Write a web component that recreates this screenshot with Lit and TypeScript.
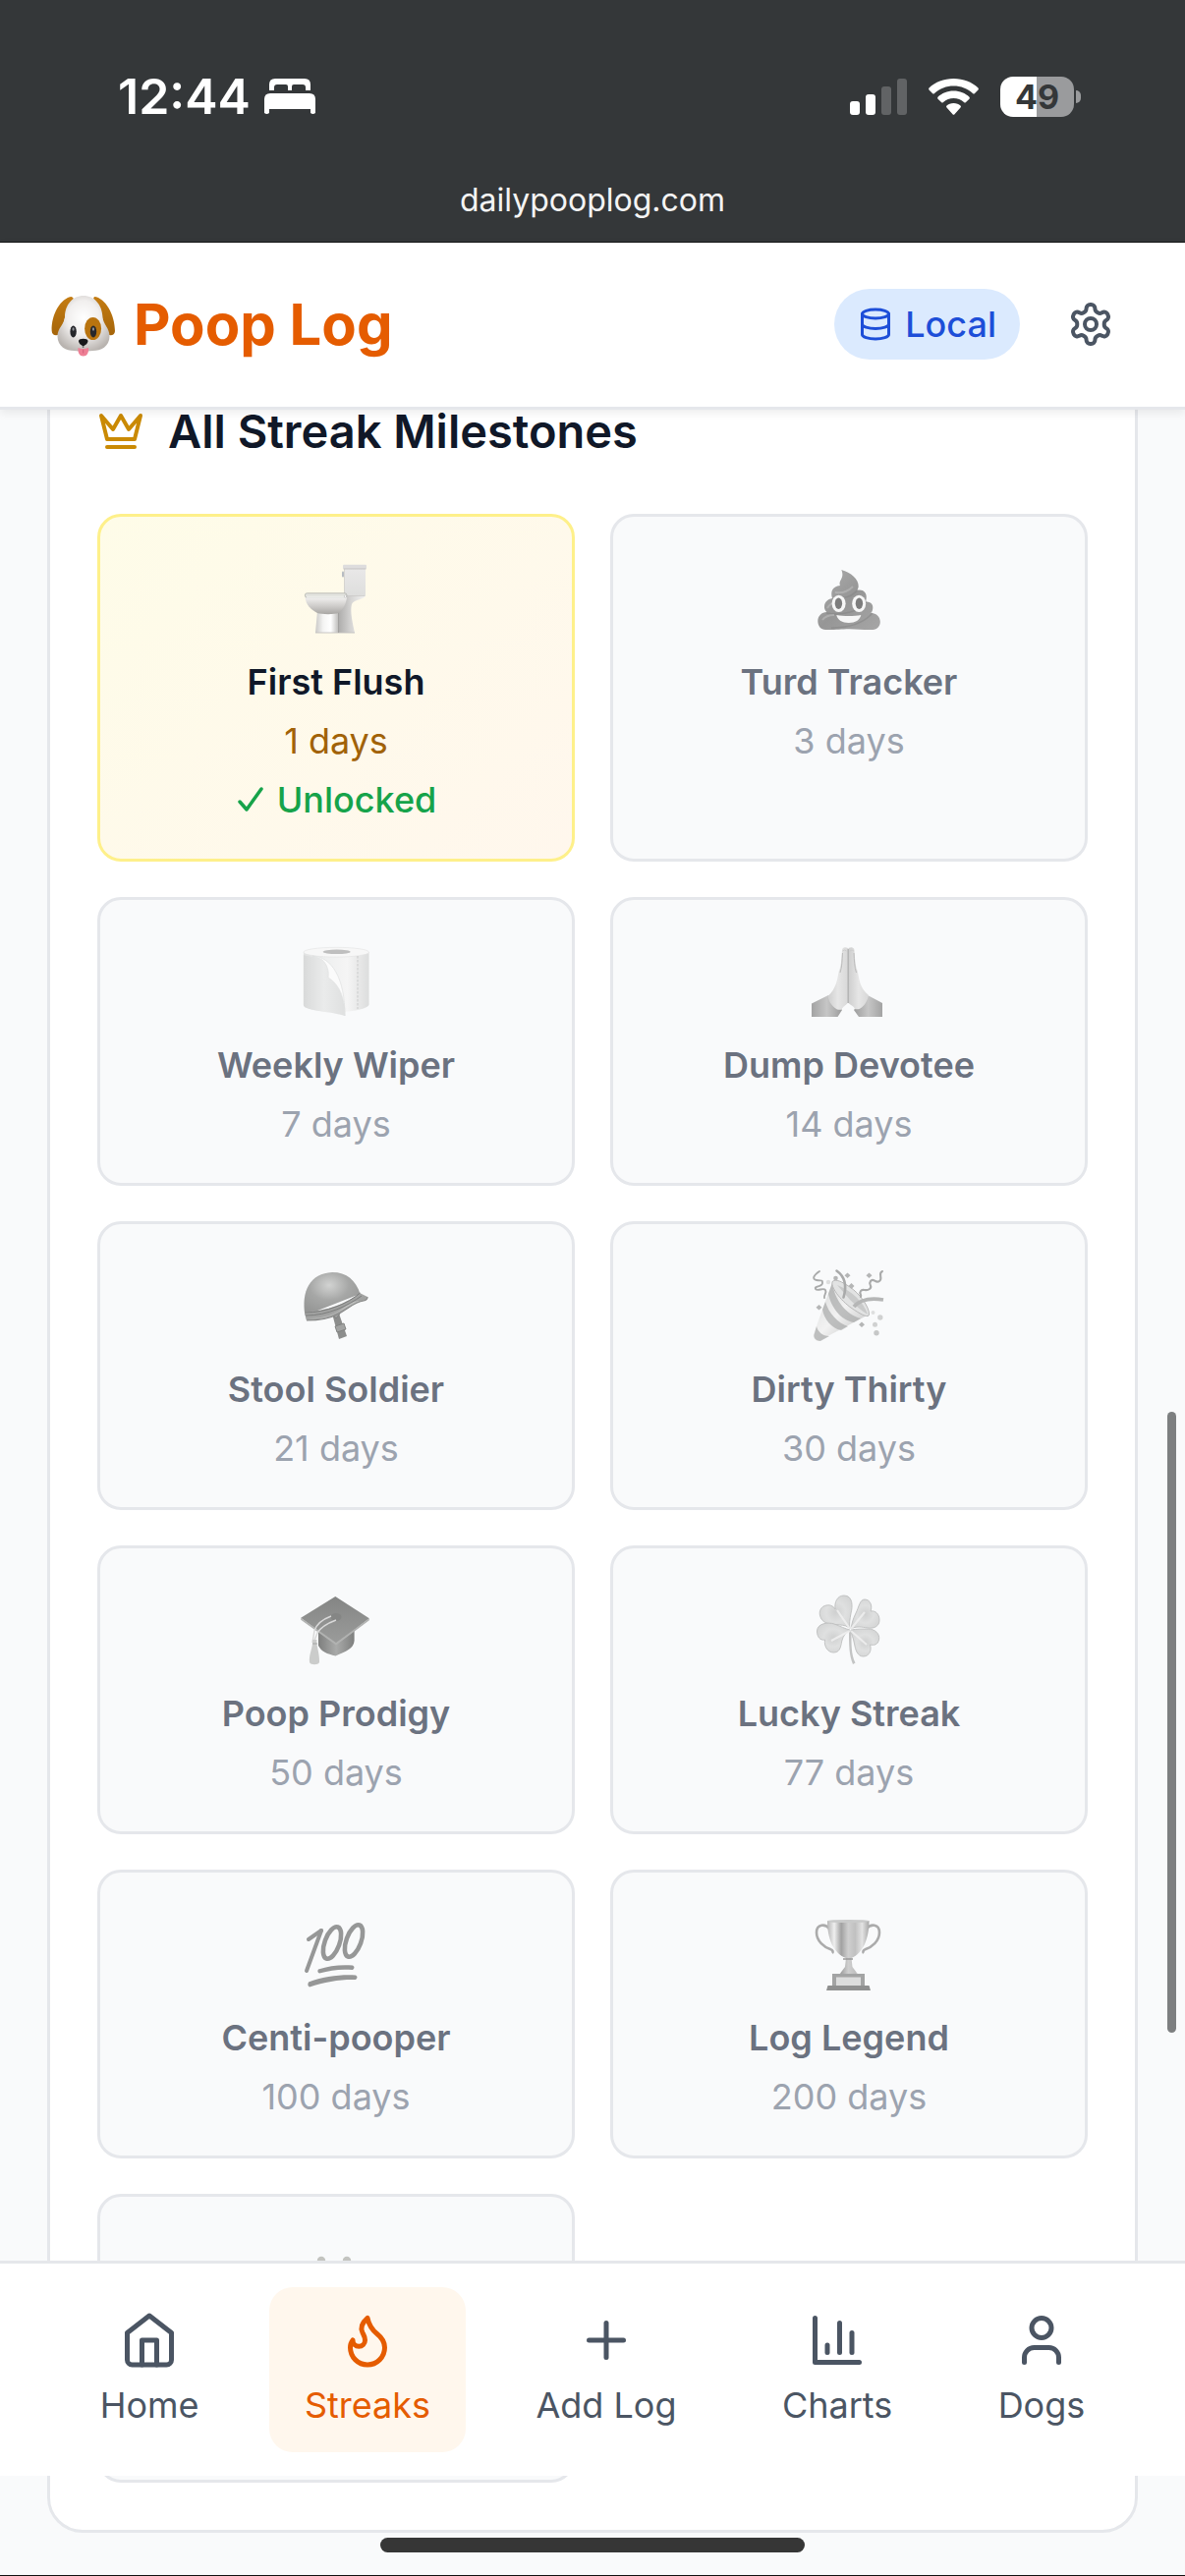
import { LitElement, html, svg, css, type SVGTemplateResult } from "lit";
import { customElement } from "lit/decorators.js";
import { classMap } from "lit/directives/class-map.js";

interface Milestone {
  art: SVGTemplateResult;
  name?: string;
  days?: string;
  unlocked?: boolean;
}

interface Tab {
  label: string;
  icon: SVGTemplateResult;
  active?: boolean;
}

/* Line icons on a 24 unit grid */
const homeIcon = svg`<path d="m3 9 9-7 9 7v11a2 2 0 0 1-2 2H5a2 2 0 0 1-2-2z"/><polyline points="9 22 9 12 15 12 15 22"/>`;
const flameIcon = svg`<path d="M8.5 14.5A2.5 2.5 0 0 0 11 12c0-1.38-.5-2-1-3-1.072-2.143-.224-4.054 2-6 .5 2.5 2 4.9 4 6.5 2 1.6 3 3.5 3 5.5a7 7 0 1 1-14 0c0-1.153.433-2.294 1-3a2.5 2.5 0 0 0 2.5 2.5z"/>`;
const plusIcon = svg`<path d="M5 12h14"/><path d="M12 5v14"/>`;
const chartIcon = svg`<path d="M3 3v18h18"/><path d="M18 17V9"/><path d="M13 17V5"/><path d="M8 17v-3"/>`;
const userIcon = svg`<path d="M19 21v-2a4 4 0 0 0-4-4H9a4 4 0 0 0-4 4v2"/><circle cx="12" cy="7" r="4"/>`;
const crownIcon = svg`<path d="m2 4 3 12h14l3-12-6 7-4-7-4 7-6-7zm3 16h14"/>`;
const databaseIcon = svg`<ellipse cx="12" cy="5" rx="9" ry="3"/><path d="M3 5V19A9 3 0 0 0 21 19V5"/><path d="M3 12A9 3 0 0 0 21 12"/>`;
const settingsIcon = svg`<path d="M12.22 2h-.44a2 2 0 0 0-2 2v.18a2 2 0 0 1-1 1.73l-.43.25a2 2 0 0 1-2 0l-.15-.08a2 2 0 0 0-2.73.73l-.22.38a2 2 0 0 0 .73 2.73l.15.1a2 2 0 0 1 1 1.72v.51a2 2 0 0 1-1 1.74l-.15.09a2 2 0 0 0-.73 2.73l.22.38a2 2 0 0 0 2.73.73l.15-.08a2 2 0 0 1 2 0l.43.25a2 2 0 0 1 1 1.73V20a2 2 0 0 0 2 2h.44a2 2 0 0 0 2-2v-.18a2 2 0 0 1 1-1.73l.43-.25a2 2 0 0 1 2 0l.15.08a2 2 0 0 0 2.73-.73l.22-.39a2 2 0 0 0-.73-2.73l-.15-.08a2 2 0 0 1-1-1.74v-.5a2 2 0 0 1 1-1.74l.15-.09a2 2 0 0 0 .73-2.73l-.22-.38a2 2 0 0 0-2.73-.73l-.15.08a2 2 0 0 1-2 0l-.43-.25a2 2 0 0 1-1-1.73V4a2 2 0 0 0-2-2z"/><circle cx="12" cy="12" r="3"/>`;

/* Pictograms on a 72 unit grid */
const dogArt = svg`<g transform="translate(0 6)">
  <path d="M25 2C14 3 4 20 4.700 37c0 5 7 6 9 1C18 28 18 14 27 4z" fill="url(#ear)"/>
  <path d="M48 2C59 3 69 20 69 37c0 5-7 6-9 1C56 28 56 14 47 4z" fill="url(#ear)"/>
  <path d="M37 1c11 0 19 9 19.500 22 .5 7 7 11 7 19 0 11-9 15-17 15-4 0-6 1-9.500 1s-5.500-1-9.500-1c-8 0-17-4-17-15 0-8 7-12 7.500-19C18 10 26 1 37 1z" fill="url(#fur)"/>
  <ellipse cx="46.600" cy="34.500" rx="8.500" ry="11.500" fill="#b9740f"/>
  <ellipse cx="26.600" cy="37.500" rx="3.200" ry="6" fill="#26272b"/>
  <ellipse cx="47" cy="37.500" rx="3.200" ry="6" fill="#26272b"/>
  <ellipse cx="26.600" cy="35" rx="1.100" ry="1.800" fill="#8d8f94"/>
  <ellipse cx="47" cy="35" rx="1.100" ry="1.800" fill="#8d8f94"/>
  <path d="M36.600 50v4" stroke="#6b6b6b" stroke-width="1.500"/>
  <path d="M31.500 54c3 1.500 7 1.500 10.500 0 .5 5-1.500 8.500-5.200 8.500S31 59 31.500 54z" fill="#ee7f95"/>
  <path d="M36.700 55.500v4" stroke="#cf5d78" stroke-width="1"/>
  <path d="M32 47c0-3 9.500-3 9.500 0 0 2.500-3 5-4.800 5S32 49.500 32 47z" fill="#17181a"/></g>`;

const toiletArt = svg`
  <path d="M43 32h23c0 4-12 4-14 9-2 7 1 20 3 29H37V45z" fill="url(#back)"/>
  <rect x="44.500" y="4" width="21.500" height="28.500" rx="1" fill="url(#tank)"/>
  <rect x="43" y="0.700" width="24" height="4.300" rx="1" fill="#dedddd"/>
  <path d="M43.500 5h23" stroke="#bcbbba" stroke-width="0.800"/>
  <rect x="42" y="7.500" width="2" height="6" rx="1" fill="#b7bcc2"/>
  <path d="M44.500 5v27.500h21" fill="none" stroke="#c4c3c1" stroke-width="0.600"/>
  <path d="M17 48h21.500v22H15z" fill="url(#pedestal)"/>
  <path d="M15 70h40" stroke="#c2c1bf" stroke-width="0.900"/>
  <path d="M38.500 48v22" stroke="#a2a19f" stroke-width="1"/>
  <path d="M4.500 34h42.500c-1 8-4 12-8.500 16-4 1.500-17 1.500-21.500 0C10 46 5.500 42 4.500 34z" fill="url(#bowl)"/>
  <rect x="4.400" y="29.800" width="42.500" height="4.400" rx="2" fill="#e3e4df" stroke="#a9aaa5" stroke-width="0.700"/>
  <path d="M6 34h40" stroke="#fff" stroke-width="1.100"/>
  <circle cx="45.500" cy="33" r="1.200" fill="#fff" stroke="#aaa" stroke-width="0.500"/>`;

const poopArt = svg`
  <path d="M28.300 6C38 9 46 15 45.700 23c-.2 2-1 3-2 4 5-2 11 1 10 8-.2 2-.6 3-1 4 5-1 8 2 7.600 6-.2 2-.8 4-2 5 6 0 9.500 4 9.500 9 0 4-3 8-7.500 8-8 .5-14-.8-24-.8-9 0-14 1-24 .8-5 0-8-4-8-9s4-9 9-9c-2-2-2.500-4-2.300-6 .2-4 3-7 8-8-2-7 0-12 8-13-2-6 5-7 1.300-16z" fill="url(#dung)"/>
  <path d="M20 35c10 1 20-2 25-9M13 50c15 3 34-1 41-12M18 65c20 0 34-6 42-15" fill="none" stroke="#858585" stroke-width="1.600" opacity=".55"/>
  <path d="M22 29c6 1 13-1 18-6M14 45c3-5 7-6 10-6M9 57c3-4 8-5 12-5" fill="none" stroke="#bdbdbd" stroke-width="2" opacity=".6"/>
  <ellipse cx="25.600" cy="40.300" rx="7" ry="8.600" fill="#f7f7f7"/><ellipse cx="46.200" cy="40.300" rx="7" ry="8.600" fill="#f7f7f7"/>
  <ellipse cx="25.400" cy="40.300" rx="3.700" ry="5.700" fill="#7d7d7d"/><ellipse cx="46.400" cy="40.300" rx="3.700" ry="5.700" fill="#7d7d7d"/>
  <path d="M23.300 52c7 1.300 18 1.300 25 0-1 5-6 8-12.500 8s-11.500-3-12.500-8z" fill="#f7f7f7"/>`;

const paperArt = svg`<g transform="translate(2 0)">
  <path d="M.900 5v54c2 4 16 7 33 7s31-3 33.600-7V5z" fill="url(#roll)"/>
  <ellipse cx="34.200" cy="5.200" rx="33.300" ry="4.900" fill="#f7f7f7" stroke="#e2e3e3" stroke-width="0.600"/>
  <ellipse cx="34.700" cy="4.800" rx="14" ry="2.300" fill="#bfbfbf"/>
  <path d="M56 9v54" stroke="#c6c7c7" stroke-width="0.900" stroke-dasharray="2.500 1.500"/>
  <path d="M.900 8c6 2 13 1 19 5 7 5 7 11 6 18 12 7 17 22 17 39-12-4-26-4-36-7-3-1-6-2-6-4z" fill="url(#sheet)"/>
  <path d="M10 9c20 1 33 23 33 61 0-17-5-32-17-39 1-7-1-13-6-18-3-2-6-3-10-4z" fill="#fbfbfb" stroke="#dcdddd" stroke-width="0.600"/></g>`;

const handsArt = svg`
  <path d="M-2 57.500 15 49l14 15-4.500 7H-2z" fill="url(#cuffL)"/>
  <path d="M70 57 55 49 41 64l5 7h24z" fill="url(#cuffR)"/>
  <path d="M35 1c-3-1.500-5.500-1-6 2-.6 7-.6 12-2 18-2 4-2 10-4 16-2 5-4 9-8.500 13 1 6 5 11 9.500 13.500 3 .5 5 .5 5-1 2-3 4-3 6-6z" fill="url(#palm)"/>
  <path d="M35.500 1c3-1.500 5.500-1 6 2 .6 7 .6 12 2 18 2 4 2 10 4 16 2 5 4 8 8.500 12-1 6-5 12-9.500 14-3 .5-5 .5-5-1-2-3-4-3-6-5z" fill="url(#palm)"/>
  <path d="M35.200 2v55" stroke="#a9a9a9" stroke-width="1.200"/>
  <path d="M29.500 4q2-2 4 0M37 4q2-2 4 0" fill="none" stroke="#c9c9c9" stroke-width="0.800"/>
  <path d="M29.500 6c-.5 8-.5 14-2.500 20M41 6c.5 8 .5 14 2.500 20" fill="none" stroke="#bcbcbc" stroke-width="1"/>`;

const helmetArt = svg`
  <path d="M32 43h7l8 23-8 3z" fill="#8c8d8c"/>
  <path d="M32 43l4 5 4-5M35 56l9-3 2 6-9 3z" fill="#a2a3a2" stroke="#7e7f7e" stroke-width="0.900"/>
  <path d="M4.500 45C0 20 10 2 32 1c15 0 24 8 28.500 22z" fill="url(#dome)"/>
  <path d="M4.500 41C26 41 48 32 60 22l8 4c0 2-1 3.500-4 4-9 1-17 9-27 14-9 4-20 6-31 6-1-2-1.500-5-1.500-9z" fill="#a1a2a1"/>
  <path d="M8 48c16 0 27-4 37-12 6-4 10-6 15-6-7 3-13 7-23 12-9 5-19 7-29 6z" fill="#bcbdbc"/>
  <path d="M4.500 42C26 42 48 33 60.500 22M5 45C28 45 48 35 62 25" fill="none" stroke="#7d7e7d" stroke-width="1"/>
  <path d="M6 50c12 0 22-1 31-6 10-5 18-13 27-14 3-.5 4-2 4-4" fill="none" stroke="#888988" stroke-width="1.200"/>`;

const partyArt = svg`
  <path d="M19.500 10 0 64c-1 4 2 8 6 6.500L56 44C55 28 38 12 19.500 10z" fill="url(#cone)"/>
  <path d="M15 23c3 14 13 27 26 29l7-4C33 44 22 30 19 12zM9 39c2 10 9 19 19 21l7-4C25 53 15 42 12 31zM3 56c1 5 6 10 13 10l-9 5c-5 0-8-4-6-8z" fill="#a8a9a9" opacity=".7"/>
  <path d="M19.500 10C16 15 28 30 38 37s18 11 18.500 7C57 36 46 22 37 16s-14-8-17.500-6z" fill="#e2e3e3" stroke="#b9b9b9" stroke-width="1"/>
  <path d="M24 14c8 9 18 22 31 30-4-13-16-24-31-30z" fill="#c9caca"/>
  <g fill="none" stroke="#a9aaaa" stroke-linecap="round">
    <path d="M6 0c-6 4-8 8-3 9s6-1 6 3-9 3-7 6 8-2 10 1-2 5-1 8" stroke-width="1.900"/>
    <path d="M23.500-.5c10 7 10 17 7 27" stroke-width="2.600"/>
    <path d="M70 0c-5 2 1 7-3 10s-6-4-9 0 3 5-1 8-7-1-9 2 1 3 0 6" stroke-width="2.100"/>
    <path d="M41 36c7-8 18-9 30-7" stroke-width="3.800" stroke-linecap="butt" stroke="#b5b6b6"/>
  </g>
  <g fill="#b5b6b6"><path d="m34.500 1.500 3 2.800-3 2.800-3-2.800zM38.500 12l3 3-3 3-3-3zM56.500 1.500l3 2.800-3 2.800-3-2.800zM5.500 34l3 2.800-3 2.800-3-2.800zM49 51.500l3 2.800-3 2.800-3-2.800z"/>
    <circle cx="22.500" cy="7" r="2.300"/><circle cx="15" cy="11" r="2.200" fill="#dedfdf"/><circle cx="62.500" cy="54.300" r="2.500" fill="#d0d1d1"/><circle cx="67.800" cy="47" r="2.700" fill="#d0d1d1"/><circle cx="64" cy="62.700" r="2.700" fill="#c6c7c7"/><circle cx="60.500" cy="42" r="2" fill="#dedfdf"/></g>`;

const gradArt = svg`
  <path d="M18 36v15c3 6 9 8.500 17.500 10.500C46 57 54 54 54.600 46V35z" fill="url(#skull)"/>
  <path d="M.200 22.700 35.300 1l34.500 22.300L36 49.300z" fill="url(#board)"/>
  <path d="M.200 22.700 36 48l33.800-24.700v2L36 50.500.200 24.700z" fill="#b1b2b1"/>
  <ellipse cx="36" cy="22" rx="5.500" ry="4" fill="#858685"/>
  <path d="M31 21c-8 3-15 8-17 15l-2 12M36 25c-8 3-16 8-19 13l-3 8" fill="none" stroke="#d9d9d9" stroke-width="1.500"/>
  <path d="M12 45h4.500c-1 5 3 14 2.500 23-1 3-9 3-10 0-1-8 4-16 3-23z" fill="#cbcccb"/>
  <path d="M12 49h5" stroke="#a3a4a3" stroke-width="1"/>`;

const cloverArt = svg`
  <path d="M36 36c0 14 0 24 4 34l2.500-1.500C38 60 38.500 48 38.500 36z" fill="#c3c4c4"/>
  <g fill="url(#leaf)" stroke="#bdbebe" stroke-width="0.900">
    <path d="M37 34C33 28 21 31 13 28S3 12 13 10c5-1 8 2 9 4-1-7 2-14 9-14 9 0 9 11 7 18-1 6-2 11-1 16z"/>
    <path d="M38 34c1-6 2-10 5-16s4-14 9-14c6 0 8 7 6 12 5-1 9 3 9 9s-5 9-12 8c-6-1-12-2-17 1z"/>
    <path d="M37 35c-5-1-10-4-16-6S4 28 3.500 36c0 6 3 10 8 9-1 7 3 13 9 13 8 0 7-9 9-14s4-6 7.500-9z"/>
    <path d="M38 35c6-1 12-1 18-1s12 5 10.500 11c-1 5-5 6-9 5 2 6-1 12-7 12s-8-7-9-13-3-9-3.500-14z"/>
  </g>
  <path d="M37 34 24 15M38 34l14-17M37 36 18 46M38 36l16 14" stroke="#f2f2f2" stroke-width="2.200" opacity=".8"/>`;

const hundredArt = svg`
  <g fill="none" stroke="#969797" stroke-width="4.600" stroke-linecap="round">
    <line x1="21" y1="11" x2="6" y2="52" stroke-width="4"/>
    <line x1="21" y1="11" x2="8" y2="20" stroke-width="4"/>
    <ellipse cx="32" cy="23.500" rx="7.500" ry="17" transform="rotate(20 32 23.500)"/>
    <ellipse cx="54" cy="21.500" rx="7.500" ry="17" transform="rotate(20 54 21.500)"/>
  </g>
  <path d="M18 50.500c11-4 24-5 35-4 2 1 2 3 0 4.500-12-1-22 0-34 3.500-2-1-2-2.500-1-4z" fill="#969797"/>
  <path d="M8 63.500c15-6 34-8 48-7 2 1 2 3 0 4.500-15-.5-31 2-47 7.500-2-1-2-3-1-5z" fill="#969797"/>`;

const trophyArt = svg`
  <path d="M16 9C12 4 3 4 3 13s8 15 14 17c3 1 3 3 2 4M54 9c4-5 13-5 13 4s-8 15-14 17c-3 1-3 3-2 4" fill="none" stroke="#ababab" stroke-width="2.600"/>
  <path d="M14 1h42.500c0 18-6 33-18 38l1 9 6 8H26l6-8 1-9C20 34 14 19 14 1z" fill="url(#cup)"/>
  <ellipse cx="35.200" cy="1.500" rx="21.200" ry="1.600" fill="#c9caca"/>
  <path d="M30 40h10" stroke="#999" stroke-width="1.500"/>
  <path d="M19 55h33v13H19z" fill="#a3a4a4"/>
  <path d="M23 58.500h25v8.500H23z" fill="#dcdddd"/>
  <path d="M14.500 67h42l1.500 5H13z" fill="#8f9090"/>`;

const antennaArt = svg`
  <g fill="#c3c4c0"><circle cx="21" cy="17" r="4.200"/><circle cx="47" cy="17" r="4.200"/></g>`;

const milestones: Milestone[] = [
  { art: toiletArt, name: "First Flush", days: "1 days", unlocked: true },
  { art: poopArt, name: "Turd Tracker", days: "3 days" },
  { art: paperArt, name: "Weekly Wiper", days: "7 days" },
  { art: handsArt, name: "Dump Devotee", days: "14 days" },
  { art: helmetArt, name: "Stool Soldier", days: "21 days" },
  { art: partyArt, name: "Dirty Thirty", days: "30 days" },
  { art: gradArt, name: "Poop Prodigy", days: "50 days" },
  { art: cloverArt, name: "Lucky Streak", days: "77 days" },
  { art: hundredArt, name: "Centi-pooper", days: "100 days" },
  { art: trophyArt, name: "Log Legend", days: "200 days" },
  { art: antennaArt },
];

const tabs: Tab[] = [
  { label: "Home", icon: homeIcon },
  { label: "Streaks", icon: flameIcon, active: true },
  { label: "Add Log", icon: plusIcon },
  { label: "Charts", icon: chartIcon },
  { label: "Dogs", icon: userIcon },
];

@customElement("app-root")
export class AppRoot extends LitElement {
  static styles = css`
    :host {
      display: flex;
      flex-direction: column;
      min-height: 100vh;
      box-sizing: border-box;
      background: #f9fafb;
      border-bottom: 1px solid #111;
      color: #101828;
      font-family: Inter, "Liberation Sans", sans-serif;
      font-size: 36px;
      line-height: 48px;
    }
    * {
      box-sizing: border-box;
    }
    svg {
      display: block;
      flex: none;
      overflow: visible;
    }
    .line {
      fill: none;
      stroke: currentColor;
      stroke-width: 2;
      stroke-linecap: round;
      stroke-linejoin: round;
    }
    .s36 { width: 36px; height: 36px; }
    .s48 { width: 48px; height: 48px; }
    .s60 { width: 60px; height: 60px; }
    .s72 { width: 72px; height: 72px; }
    .defs {
      position: absolute;
      width: 0;
      height: 0;
    }

    .status {
      display: flex;
      flex-direction: column;
      background: #343739;
      border-bottom: 1px solid #151616;
      color: #fff;
      padding: 68px 0 18px;
    }
    .status-row {
      display: flex;
      align-items: center;
      justify-content: space-between;
      height: 60px;
      padding: 0 106px 0 120px;
    }
    .clock {
      display: flex;
      align-items: center;
      gap: 14px;
      font-size: 50px;
      font-weight: 600;
      line-height: 60px;
    }
    .signals {
      display: flex;
      align-items: center;
      gap: 22px;
    }
    .battery {
      display: flex;
      align-items: center;
      gap: 2px;
    }
    .cell {
      width: 75px;
      height: 41px;
      border-radius: 13px;
      background: linear-gradient(90deg, #fff 50%, #9a9b9d 50%);
      color: #343739;
      font-size: 34px;
      font-weight: 700;
      line-height: 41px;
      text-align: center;
    }
    .nub {
      width: 5px;
      height: 13px;
      border-radius: 0 6px 6px 0;
      background: #9a9b9d;
    }
    .address {
      padding-top: 52px;
      text-align: center;
      font-size: 32px;
      line-height: 48px;
      color: #f4f4f4;
    }

    .header {
      position: relative;
      z-index: 2;
      display: flex;
      align-items: center;
      justify-content: space-between;
      padding: 35px 48px 36px;
      background: #fff;
      border-bottom: 3px solid #e5e7eb;
      box-shadow: 0 3px 9px rgba(0, 0, 0, 0.08);
    }
    .brand {
      display: flex;
      align-items: center;
      gap: 16px;
      margin: 0;
      color: #e55c00;
      font-size: 58px;
      font-weight: 700;
      line-height: 84px;
    }
    .actions {
      display: flex;
      align-items: center;
      gap: 24px;
    }
    button {
      border: 0;
      font: inherit;
      cursor: pointer;
    }
    .storage {
      display: flex;
      align-items: center;
      gap: 12px;
      padding: 12px 24px;
      border-radius: 36px;
      background: #dbeafe;
      color: #1d4ed8;
      font-weight: 500;
    }
    .settings {
      padding: 24px;
      background: none;
      color: #4b5563;
    }

    .content {
      padding: 0 48px 43px;
    }
    /* The panel is scrolled partly under the header */
    .panel {
      margin-top: -65px;
      padding: 48px;
      background: #fff;
      border: 3px solid #e5e7eb;
      border-radius: 36px;
    }
    .panel-title {
      display: flex;
      align-items: center;
      gap: 24px;
      margin: 0 0 48px;
      font-size: 47px;
      font-weight: 600;
      line-height: 72px;
    }
    .panel-title svg {
      color: #ca8a04;
    }
    .grid {
      display: grid;
      grid-template-columns: 1fr 1fr;
      gap: 36px;
      margin: 0;
      padding: 0;
      list-style: none;
    }
    .card {
      display: flex;
      flex-direction: column;
      align-items: center;
      gap: 12px;
      min-height: 294px;
      padding: 36px;
      border: 3px solid #e5e7eb;
      border-radius: 24px;
      background: #f9fafb;
      color: #9ca3af;
    }
    .art {
      padding: 12px 0;
    }
    .name {
      margin: 0;
      font-size: 36px;
      font-weight: 600;
      line-height: 48px;
      color: #6b7280;
    }
    .days {
      margin: 0;
    }
    .unlocked {
      border-color: #fef08a;
      background: linear-gradient(135deg, #fefce8, #fff7ed);
      color: #a16207;
    }
    .unlocked .name {
      color: #101828;
    }
    .badge {
      display: flex;
      align-items: center;
      gap: 12px;
      margin: 0;
      color: #16a34a;
      font-weight: 500;
    }

    .tabs {
      position: fixed;
      z-index: 2;
      left: 0;
      right: 0;
      bottom: 102px;
      display: flex;
      justify-content: space-around;
      padding: 24px 48px;
      background: #fff;
      border-top: 3px solid #e5e7eb;
    }
    .tab {
      display: flex;
      flex-direction: column;
      align-items: center;
      gap: 12px;
      padding: 24px 36px;
      border-radius: 24px;
      color: #4b5563;
      text-decoration: none;
    }
    .tab.active {
      background: #fff7ed;
      color: #e55c00;
    }
    .thumb {
      position: fixed;
      right: 9px;
      top: 1437px;
      width: 9px;
      height: 632px;
      border-radius: 5px;
      background: #7d7f80;
    }
    .indicator {
      position: fixed;
      bottom: 24px;
      left: 50%;
      width: 432px;
      height: 15px;
      margin-left: -216px;
      border-radius: 8px;
      background: #363636;
    }
  `;

  private icon(shape: SVGTemplateResult, size: string) {
    return html`<svg class="line ${size}" viewBox="0 0 24 24" aria-hidden="true">${shape}</svg>`;
  }

  private picture(shape: SVGTemplateResult) {
    return html`<svg class="s72" viewBox="0 0 72 72" aria-hidden="true">${shape}</svg>`;
  }

  private gradients() {
    const linear = (id: string, angle: "h" | "v" | "d", stops: string[]) => svg`
      <linearGradient id=${id} x1="0" y1="0" x2=${angle === "v" ? 0 : 1} y2=${angle === "h" ? 0 : 1}>
        ${stops.map((c, i) => svg`<stop offset=${i / (stops.length - 1)} stop-color=${c}></stop>`)}
      </linearGradient>`;
    const radial = (id: string, cx: number, cy: number, r: number, stops: string[]) => svg`
      <radialGradient id=${id} cx=${cx} cy=${cy} r=${r}>
        ${stops.map((c, i) => svg`<stop offset=${i / (stops.length - 1)} stop-color=${c}></stop>`)}
      </radialGradient>`;
    return html`<svg class="defs" aria-hidden="true"><defs>
      ${linear("ear", "v", ["#c47c12", "#a5650a"])}
      ${radial("fur", 0.5, 0.4, 0.62, ["#ffffff", "#f1efee", "#b9b4b0"])}
      ${linear("back", "h", ["#a9a8a7", "#d6d5d4", "#f4f4f3"])}
      ${linear("tank", "v", ["#e9e8e8", "#dededd"])}
      ${linear("pedestal", "h", ["#c9c8c6", "#f4f4f3", "#ffffff", "#bdbcba"])}
      ${linear("bowl", "v", ["#f2f1f0", "#cfcdcb", "#a9a7a4"])}
      ${linear("dung", "d", ["#adadad", "#969696", "#a6a6a6"])}
      ${linear("roll", "h", ["#e1e2e2", "#eeefef", "#f5f5f5", "#dcdddd"])}
      ${linear("sheet", "h", ["#d9dada", "#eaebeb", "#dfe0e0"])}
      ${linear("cuffL", "h", ["#a3a3a3", "#c6c6c6", "#9c9c9c"])}
      ${linear("cuffR", "h", ["#9c9c9c", "#c6c6c6", "#a3a3a3"])}
      ${linear("palm", "h", ["#cecece", "#e6e6e6", "#d8d8d8"])}
      ${radial("dome", 0.45, 0.3, 0.7, ["#d2d3d2", "#a6a7a6", "#959695"])}
      ${linear("cone", "d", ["#d5d6d6", "#f2f2f2", "#b9baba"])}
      ${linear("board", "v", ["#848584", "#9b9c9b"])}
      ${linear("skull", "h", ["#7e7f7e", "#a9aaa9", "#7e7f7e"])}
      ${radial("leaf", 0.5, 0.5, 0.6, ["#cfd0d0", "#dfe0e0", "#d3d4d4"])}
      ${linear("cup", "h", ["#b5b5b5", "#efefef", "#a1a1a1", "#cfcfcf", "#c0c0c0", "#e3e3e3", "#a8a8a8"])}
    </defs></svg>`;
  }

  private card(m: Milestone) {
    return html`<li class=${classMap({ card: true, unlocked: !!m.unlocked })}>
      <div class="art">${this.picture(m.art)}</div>
      ${m.name ? html`<h3 class="name">${m.name}</h3>` : null}
      ${m.days ? html`<p class="days">${m.days}</p>` : null}
      ${m.unlocked
        ? html`<p class="badge">
            <svg width="30" height="30" viewBox="0 0 30 30" aria-hidden="true">
              <path d="M4 17l7 8L26 4" fill="none" stroke="currentColor" stroke-width="3.500" stroke-linecap="round" stroke-linejoin="round"></path>
            </svg>
            <span>Unlocked</span>
          </p>`
        : null}
    </li>`;
  }

  render() {
    return html`
      ${this.gradients()}
      <div class="status">
        <div class="status-row">
          <div class="clock">
            <span>12:44</span>
            <svg width="52" height="36" viewBox="0 0 52 36" fill="#fff" aria-hidden="true">
              <path d="M5 12V6q0-6 6-6h30q6 0 6 6v6h-5V9q0-3-3-3h-9q-2 0-2 2v4h-4V8q0-2-2-2h-9q-3 0-3 3v3z" />
              <path d="M0 35V21q0-6 6-6h40q6 0 6 6v14q-2.500 2-5 0v-4H5v4q-2.500 2-5 0z" />
            </svg>
          </div>
          <div class="signals">
            <svg width="58" height="37" viewBox="0 0 58 37" aria-hidden="true">
              <rect x="0" y="23" width="10" height="14" rx="3" fill="#fff" />
              <rect x="16" y="16" width="10" height="21" rx="3" fill="#fff" />
              <rect x="32" y="8" width="10" height="29" rx="3" fill="#616365" />
              <rect x="48" y="0" width="10" height="37" rx="3" fill="#616365" />
            </svg>
            <svg width="51" height="37" viewBox="0 0 51 37" fill="#fff" aria-hidden="true">
              <path d="M25.500 0C35.500 0 44 3.500 50.500 9.500q.8 1 0 2L47 15q-1 1-2 0C39.500 10 33 7.500 25.500 7.500S11.500 10 6 15q-1 1-2 0L.500 11.500q-.8-1 0-2C7 3.500 15.500 0 25.500 0z" />
              <path d="M25.500 12.500c6.500 0 12 2.500 16 6.200q.8 1 0 2L38 24q-1 1-2 0c-3-2.600-6.500-4-10.500-4s-7.500 1.400-10.500 4q-1 1-2 0l-3.500-3.300q-.8-1 0-2c4-3.700 9.500-6.200 16-6.200z" />
              <path d="M25.500 25c3 0 5.300 1 7 2.500q1 1 0 2l-6 6.700q-1 1-2 0l-6-6.700q-1-1 0-2c1.700-1.500 4-2.500 7-2.500z" />
            </svg>
            <div class="battery">
              <div class="cell">49</div>
              <div class="nub"></div>
            </div>
          </div>
        </div>
        <div class="address">dailypooplog.com</div>
      </div>

      <header class="header">
        <h1 class="brand">${this.picture(dogArt)}<span>Poop Log</span></h1>
        <div class="actions">
          <button class="storage" type="button">${this.icon(databaseIcon, "s36")}<span>Local</span></button>
          <button class="settings" type="button" aria-label="Settings">${this.icon(settingsIcon, "s48")}</button>
        </div>
      </header>

      <main class="content">
        <section class="panel">
          <h2 class="panel-title">${this.icon(crownIcon, "s48")}<span>All Streak Milestones</span></h2>
          <ul class="grid">
            ${milestones.map((m) => this.card(m))}
          </ul>
        </section>
      </main>

      <nav class="tabs">
        ${tabs.map(
          (t) => html`<a class=${classMap({ tab: true, active: !!t.active })} href="#">
            ${this.icon(t.icon, "s60")}<span>${t.label}</span>
          </a>`
        )}
      </nav>
      <div class="thumb"></div>
      <div class="indicator"></div>
    `;
  }
}
